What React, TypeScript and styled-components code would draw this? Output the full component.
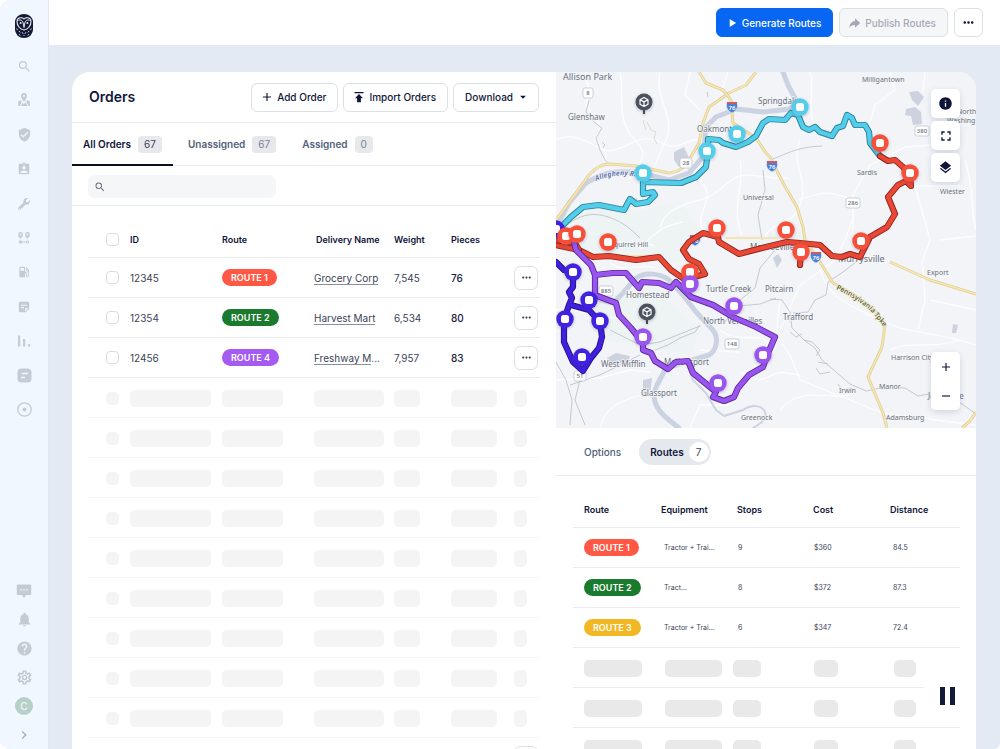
import React from "react";
import styled, { createGlobalStyle } from "styled-components";
import {
  MdAdd,
  MdArrowDropDown,
  MdAssignmentInd,
  MdChevronRight,
  MdFullscreen,
  MdHelp,
  MdInfo,
  MdLayers,
  MdLocalGasStation,
  MdMoreHoriz,
  MdNotifications,
  MdOutlineSettings,
  MdPlayArrow,
  MdRemove,
  MdSearch,
  MdVerifiedUser,
} from "react-icons/md";
import { FaWrench } from "react-icons/fa";

const ink = "#10163a";
const slate = "#52617a";
const line = "#e9ebee";

const GlobalStyle = createGlobalStyle`
  *, *::before, *::after { box-sizing: border-box; }
  body {
    margin: 0;
    background: #fff;
    color: ${ink};
    font-family: Inter, "Liberation Sans", sans-serif;
    font-size: 10px;
    line-height: 14px;
  }
  button, input { font: inherit; color: inherit; }
  button { cursor: pointer; }
`;

/* ---------- Shell ---------- */

const Shell = styled.div`
  position: relative;
  display: flex;
  height: 100vh;
  overflow: hidden;
  border-radius: 10px 0 6px 10px;
  background: #e4eaf3;
`;

const Sidebar = styled.aside`
  display: flex;
  flex-direction: column;
  align-items: center;
  flex: none;
  width: 49px;
  padding: 14px 0 5px;
  background: #f1f7fe;
  border-right: 1px solid #e2e8f1;
`;

const NavGroup = styled.nav<{ $height: number }>`
  display: flex;
  flex-direction: column;
  align-items: center;
  justify-content: space-between;
  height: ${(p) => p.$height}px;
`;

const NavLink = styled.a`
  display: flex;
  align-items: center;
  justify-content: center;
  width: 20px;
  height: 18px;
  color: #c5cbd4;
`;

const Spacer = styled.div<{ $size?: number }>`
  flex: ${(p) => (p.$size ? `0 0 ${p.$size}px` : "1")};
`;

const Avatar = styled.span`
  display: flex;
  align-items: center;
  justify-content: center;
  flex: none;
  width: 18px;
  height: 18px;
  border-radius: 50%;
  background: #b4d0c7;
  color: #f1f7fe;
  font-size: 10px;
  font-weight: 500;
`;

const Main = styled.main`
  display: flex;
  flex-direction: column;
  flex: 1;
  min-width: 0;
`;

const TopBar = styled.header`
  display: flex;
  align-items: center;
  justify-content: flex-end;
  gap: 6px;
  flex: none;
  height: 45px;
  padding: 0 17px;
  background: #fff;
`;

const Workspace = styled.div`
  display: grid;
  grid-template-columns: minmax(0, 484fr) minmax(0, 420fr);
  flex: 1;
  min-height: 0;
  margin: 27px 24px 0 23px;
  border-radius: 18px 18px 0 0;
  overflow: hidden;
  background: #fff;
`;

/* ---------- Buttons ---------- */

const Button = styled.button<{ $tone?: "primary" | "muted"; $trailingIcon?: boolean }>`
  display: flex;
  align-items: center;
  justify-content: center;
  gap: 3px;
  height: 29px;
  padding: ${(p) => (p.$trailingIcon ? "0 8px 0 11px" : "0 11px 0 8px")};
  border-radius: 6px;
  white-space: nowrap;
  font-weight: 500;
  border: 1px solid
    ${(p) => (p.$tone === "primary" ? "#0767f2" : "#dcdfe4")};
  background: ${(p) =>
    p.$tone === "primary" ? "#0767f2" : p.$tone === "muted" ? "#f4f6f8" : "#fff"};
  color: ${(p) =>
    p.$tone === "primary" ? "#fff" : p.$tone === "muted" ? "#a4aab4" : ink};
`;

const IconButton = styled.button<{ $size: number }>`
  display: inline-flex;
  align-items: center;
  justify-content: center;
  width: ${(p) => p.$size}px;
  height: ${(p) => p.$size}px;
  padding: 0;
  border: 1px solid #dcdfe4;
  border-radius: 6px;
  background: #fff;
  vertical-align: middle;
`;

/* ---------- Orders panel ---------- */

const Panel = styled.section`
  display: flex;
  flex-direction: column;
  min-width: 0;
  min-height: 0;
  overflow: hidden;
`;

const PanelHeader = styled.div`
  display: flex;
  align-items: center;
  gap: 5px;
  flex: none;
  height: 51px;
  padding: 0 17px;
  border-bottom: 1px solid ${line};
`;

const Title = styled.h1`
  flex: 1;
  margin: 0;
  font-size: 14px;
  line-height: 18px;
  font-weight: 600;
`;

const TabBar = styled.div`
  display: flex;
  gap: 4px;
  flex: none;
  height: 43px;
  border-bottom: 1px solid ${line};
`;

const Tab = styled.button<{ $active?: boolean }>`
  display: flex;
  align-items: center;
  gap: 7px;
  height: 43px;
  padding: 1px 11px 0;
  border: 0;
  border-bottom: 2px solid ${(p) => (p.$active ? "#0b0e1c" : "transparent")};
  background: none;
  font-weight: 600;
  color: ${(p) => (p.$active ? ink : slate)};
`;

const TabCount = styled.span<{ $active?: boolean }>`
  padding: 0 6px;
  border-radius: 4px;
  background: #e6e8eb;
  font-weight: 400;
  line-height: 17px;
  color: ${(p) => (p.$active ? "#3d4558" : "#7c8593")};
`;

const SearchRow = styled.div`
  flex: none;
  height: 40px;
  padding: 9px 16px 0;
  border-bottom: 1px solid ${line};
`;

const SearchBox = styled.label`
  display: flex;
  align-items: center;
  gap: 6px;
  width: 188px;
  height: 23px;
  padding: 0 6px;
  border-radius: 7px;
  background: #f4f6f8;
  color: #6a7180;
`;

const SearchInput = styled.input`
  flex: 1;
  min-width: 0;
  padding: 0;
  border: 0;
  outline: 0;
  background: none;
`;

const TableWrap = styled.div<{ $left: number }>`
  flex: 1;
  min-height: 0;
  overflow: hidden;
  padding: 0 16px 0 ${(p) => p.$left}px;
`;

const Table = styled.table`
  width: 100%;
  border-collapse: separate;
  border-spacing: 0;
  table-layout: fixed;
`;

const HeadCell = styled.th<{ $pad?: number }>`
  height: 52px;
  padding: 16px 0 0 ${(p) => p.$pad ?? 0}px;
  border-bottom: 1px solid ${line};
  text-align: left;
  font-size: 9px;
  font-weight: 600;
  white-space: nowrap;
`;

const Cell = styled.td<{ $pad?: number; $small?: boolean; $faint?: boolean }>`
  height: 40px;
  padding: 0 0 0 ${(p) => p.$pad ?? 0}px;
  border-bottom: 1px solid ${(p) => (p.$faint ? "#f4f5f6" : line)};
  font-size: ${(p) => (p.$small ? 7 : 10)}px;
  white-space: nowrap;
  color: #3b4357;
`;

const BoneCell = styled(Cell)`
  padding-top: 2px;
`;

const Strong = styled.span`
  font-weight: 500;
  color: #1c2340;
`;

const Checkbox = styled.input`
  appearance: none;
  display: block;
  width: 13px;
  height: 13px;
  margin: 0;
  border: 1px solid #d9dce1;
  border-radius: 4px;
  background: #fff;
`;

const RoutePill = styled.span<{ $color: string }>`
  display: inline-block;
  padding: 0 9px;
  border-radius: 9px;
  background: ${(p) => p.$color};
  color: #fff;
  font-size: 9px;
  font-weight: 600;
  line-height: 17px;
  vertical-align: middle;
`;

const OrderLink = styled.a`
  color: #3b4357;
  text-decoration: none;
  border-bottom: 1px solid #8a90a0;
`;

const Bone = styled.span<{ $w: number; $h?: number; $dark?: boolean }>`
  display: block;
  width: ${(p) => p.$w}px;
  height: ${(p) => p.$h ?? 17}px;
  border-radius: 5px;
  background: ${(p) => (p.$dark ? "#e9e9e9" : "#f4f4f4")};
`;

/* ---------- Map and routes panel ---------- */

const MapArea = styled.div`
  position: relative;
  flex: none;
  height: 356px;
  background: #f2f4f8;
`;

const MapSvg = styled.svg`
  display: block;
  width: 100%;
  height: 100%;
  font-family: "Noto Sans", "Open Sans", sans-serif;
`;

const MapControls = styled.div<{ $bottom?: boolean }>`
  position: absolute;
  right: 16px;
  ${(p) => (p.$bottom ? "bottom: 18px;" : "top: 17px;")}
  display: flex;
  flex-direction: column;
  gap: ${(p) => (p.$bottom ? 0 : 3)}px;
  border-radius: 5px;
  ${(p) => (p.$bottom ? "background: #fff; box-shadow: 0 2px 6px rgba(40, 50, 80, 0.16);" : "")}
`;

const MapButton = styled.button<{ $flat?: boolean }>`
  display: flex;
  align-items: center;
  justify-content: center;
  width: 29px;
  height: 29px;
  padding: 0;
  border: 0;
  border-radius: 5px;
  background: #fff;
  box-shadow: ${(p) => (p.$flat ? "none" : "0 2px 6px rgba(40, 50, 80, 0.16)")};
`;

const RouteTabs = styled.div`
  display: flex;
  align-items: center;
  gap: 7px;
  flex: none;
  height: 48px;
  padding: 0 17px;
  border-bottom: 1px solid ${line};
`;

const PillTab = styled.button<{ $active?: boolean }>`
  display: flex;
  align-items: center;
  gap: 5px;
  height: 26px;
  padding: ${(p) => (p.$active ? "0 2px 0 11px" : "0 11px")};
  border: 0;
  border-radius: 13px;
  background: ${(p) => (p.$active ? "#e5e9ee" : "none")};
  color: ${(p) => (p.$active ? ink : slate)};
  font-weight: ${(p) => (p.$active ? 600 : 500)};
`;

const PillCount = styled.span`
  width: 20px;
  border-radius: 10px;
  background: #fff;
  color: #3d4558;
  font-weight: 400;
  line-height: 20px;
  text-align: center;
`;

const PauseButton = styled.button`
  position: absolute;
  right: 30px;
  bottom: 36px;
  display: flex;
  align-items: center;
  justify-content: center;
  gap: 5px;
  width: 46px;
  height: 34px;
  padding: 0;
  border: 0;
  background: #fff;
`;

const PauseBar = styled.span`
  width: 5px;
  height: 18px;
  background: #141b38;
`;

/* ---------- Icons ---------- */

const OwlLogo = () => (
  <svg width="20" height="24" viewBox="0 0 20 24" aria-label="Owl logo" role="img">
    <path d="M10 0C15 0 18 3 19 7v9c-1 5-4 8-9 8s-8-3-9-8V7c1-4 4-7 9-7z" fill="#131b36" />
    <path
      d="M10 5C8.500 3.200 3.300 2.800 3 7.500c-.2 4.500 3.500 8 7 8.500 3.500-.5 7.200-4 7-8.500C16.700 2.800 11.500 3.200 10 5z"
      fill="none"
      stroke="#e8eef7"
      strokeWidth="1.100"
    />
    <path d="M4.500 6.500c2-1.500 5-.5 5.500 7 .5-7.500 3.500-8.500 5.500-7" fill="none" stroke="#e8eef7" strokeWidth="1" />
    <circle cx="6.600" cy="9" r="1" fill="#e8eef7" />
    <circle cx="13.400" cy="9" r="1" fill="#e8eef7" />
    <path
      d="M2.600 14.500l1 1.600M5 17l1.200 1.400M8.300 18.300l.6 1.500M11.700 18.300l-.6 1.500M15 17l-1.200 1.400M17.400 14.500l-1 1.600M5 20.300l1.300 1M9.500 21.500h1M15 20.300l-1.300 1"
      stroke="#c9d4e6"
      strokeWidth="1"
      fill="none"
    />
  </svg>
);

const MapPinIcon = () => (
  <svg width="14" height="14" viewBox="0 0 14 14" fill="currentColor">
    <path d="M7 0a2.900 2.900 0 0 0-2.900 2.900C4.100 5 7 8.800 7 8.800s2.900-3.800 2.900-5.900A2.900 2.900 0 0 0 7 0zm0 1.900a1.100 1.100 0 1 1 0 2.200 1.100 1.100 0 0 1 0-2.200z" />
    <path d="M1.200 8.500l2.600-1.300 1 1.500-1.900 4.300H1.200zM4 13l1.600-3.200L7 11.300l1.600-2 1.900 3.700zM9.200 8.200l1-1 2.600 1.300V13h-1.200z" />
  </svg>
);

const ChatIcon = () => (
  <svg width="16" height="16" viewBox="0 0 16 16">
    <path d="M1.800 1.500h12.400a1 1 0 0 1 1 1v8.500a1 1 0 0 1-1 1h-4L8 14.700 5.800 12h-4a1 1 0 0 1-1-1V2.500a1 1 0 0 1 1-1z" fill="currentColor" />
    <path d="M4.300 6h1.400v1.400H4.300zM7.300 6h1.400v1.400H7.300zM10.300 6h1.400v1.400h-1.400z" fill="#f1f7fe" />
  </svg>
);

const RouteStopsIcon = () => (
  <svg width="14" height="14" viewBox="0 0 14 14" fill="currentColor">
    <path d="M3.500 1a2.400 2.400 0 0 0-2.400 2.400C1.100 5 3.500 8 3.500 8s2.400-3 2.400-4.600A2.400 2.400 0 0 0 3.500 1zm0 1.500a.9.900 0 1 1 0 1.800.9.900 0 0 1 0-1.800z" />
    <path d="M10.500 1a2.400 2.400 0 0 0-2.400 2.400C8.100 5 10.500 8 10.500 8s2.400-3 2.400-4.600A2.400 2.400 0 0 0 10.500 1zm0 1.500a.9.900 0 1 1 0 1.800.9.900 0 0 1 0-1.800z" />
    <circle cx="3.500" cy="11" r="1.700" />
    <path d="M3.500 10.500h5.500v1H3.500z" />
    <circle cx="10.500" cy="11" r="1.300" fill="none" stroke="currentColor" strokeWidth=".9" />
  </svg>
);

const NoteIcon = () => (
  <svg width="14" height="14" viewBox="0 0 24 24" fill="currentColor">
    <path d="M19 3H5C3.900 3 3 3.900 3 5v14c0 1.100.9 2 2 2h10l6-6V5c0-1.100-.9-2-2-2zM7 8h10v2H7V8zm5 6H7v-2h5v2zm2 5.500V14h5.500L14 19.500z" />
  </svg>
);

const BarsIcon = () => (
  <svg width="14" height="14" viewBox="0 0 14 14" fill="currentColor">
    <path d="M1 1.500h2.200v11H1zM6 5h2.200v7.500H6zM11 10.300h2.200v2.200H11z" />
  </svg>
);

const CardIcon = () => (
  <svg width="15" height="15" viewBox="0 0 15 15">
    <rect x=".5" y=".5" width="14" height="14" rx="4" fill="currentColor" />
    <path d="M4.500 5.500h6.500M4 9.500h4" stroke="#f1f7fe" strokeWidth="1.600" />
  </svg>
);

const TargetIcon = () => (
  <svg width="15" height="15" viewBox="0 0 15 15">
    <circle cx="7.500" cy="7.500" r="6.700" fill="none" stroke="currentColor" strokeWidth="1.300" />
    <circle cx="7.500" cy="7.500" r="2" fill="currentColor" />
  </svg>
);

const PublishIcon = () => (
  <svg width="14" height="14" viewBox="0 0 24 24" fill="currentColor">
    <path d="M12 8.500V4l9 8-9 8v-4.600c-4.500 0-7.500 1.400-10 5.100 1-6 3.500-11.500 10-12z" />
  </svg>
);

const ImportIcon = () => (
  <svg width="14" height="12" viewBox="0 0 14 12" fill="currentColor">
    <path d="M2.500 1h9v1.200h-9zM7 3l4 4.200H8.900v4H5.100v-4H3z" />
  </svg>
);

/* ---------- Map ---------- */

type Point = [number, number];

const cyan = "#52cdea";
const red = "#f8503a";
const purple = "#9a55ee";
const blue = "#4120e0";

const routeLines = [
  {
    color: cyan,
    edge: "#2a7f96",
    points:
      "556,237 564,224 571,217 583,207 599,205 624,210 630,199 636,204 648,202 655,195 653,192 643,194 643,182 681,183 696,177 706,167 708,150 708,139 719,140 723,143 736,147 748,142 756,136 763,123 769,119 785,120 791,113 798,115 803,127 809,130 815,127 820,132 832,136 837,128 843,126 847,115 852,118 855,125 865,125 869,132 870,143 880,156",
  },
  {
    color: "#e84835",
    edge: "#8d2218",
    points:
      "880,156 888,161 895,160 903,167 910,176 911,186 906,181 898,185 888,197 895,214 887,227 870,237 860,257 850,254 842,257 832,256 820,245 800,243 787,242 770,246 739,254 719,242 718,237 703,233 689,242 683,250 689,259 699,264 705,274 691,278 684,279 671,270 659,257 636,260 609,256 593,257 579,250 556,245",
  },
  { color: "#e84835", edge: "#8d2218", points: "801,252 800,265" },
  { color: "#e84835", edge: "#8d2218", points: "556,240 575,243 579,250" },
  {
    color: blue,
    edge: "#24128c",
    points:
      "556,262 564,270 573,273 573,287 569,292 572,298 569,305 564,320 564,342 573,362 583,371 591,358 599,348 602,337 600,322 589,310 571,305",
  },
  {
    color: purple,
    edge: "#5b2a9c",
    points:
      "573,238 576,250 591,265 595,275 595,295 616,303 619,315 631,328 643,343 643,350 651,353 655,361 668,369 676,362 688,361 693,373 716,392 713,397 724,401 734,397 738,388 749,375 763,367 768,353 775,337 756,327 733,317 713,305 691,297 676,282 671,288 659,283 642,282 639,288 626,273 613,273 595,275",
  },
];

const pins: { color: string; at: Point[] }[] = [
  { color: blue, at: [[556, 229], [573, 272], [589, 300], [565, 319], [600, 321], [582, 357]] },
  { color: cyan, at: [[643, 173], [707, 151], [737, 134], [800, 107]] },
  {
    color: red,
    at: [[566, 236], [577, 234], [608, 242], [717, 228], [690, 272], [786, 230], [801, 252], [861, 241], [880, 143], [910, 173]],
  },
  { color: purple, at: [[690, 284], [734, 306], [643, 337], [763, 355], [718, 383]] },
];

const depots: Point[] = [[644, 102], [647, 312]];

const streets = [
  "M585 72L589 90L586 105L600 125L596 140L605 152L607 165",
  "M620 72C625 95 615 120 635 140S630 165 640 172",
  "M556 140C575 130 590 145 605 150S640 130 660 142S690 135 700 140",
  "M660 72C655 100 672 110 668 135L655 165",
  "M690 72L685 95L700 110",
  "M728 72L722 90L735 104",
  "M740 160C745 190 730 205 742 235",
  "M700 180C720 200 690 215 705 232",
  "M800 140C790 165 810 180 800 205S770 220 765 238",
  "M853 218L845 240L833 262L800 285L780 330",
  "M930 145L905 147L870 165L853 195L853 230",
  "M965 160C975 190 970 210 976 230",
  "M900 186L960 186M915 186L930 240L922 262L925 300L918 330",
  "M780 300L776 335L790 355L800 380L830 392L882 413L976 425",
  "M820 270C830 300 850 305 880 320S930 330 976 345",
  "M780 410C800 385 830 400 850 395",
  "M556 310C580 305 590 320 610 318S630 330 640 335",
  "M556 380L600 378L630 370L650 372",
  "M600 428C605 405 625 400 640 395S655 380 668 372",
  "M690 428L700 405L730 405M740 372L760 380L780 372L800 375",
  "M660 228C665 210 680 205 700 200S725 180 740 176S765 180 790 178",
  "M640 250C650 235 665 225 683 222",
  "M810 72C815 90 808 100 812 120",
  "M890 72L895 90L875 105L870 122",
  "M925 72L923 92M860 205C830 185 815 195 798 200",
  "M720 330C740 345 760 330 770 345M700 350L740 352",
  "M610 262C620 275 640 262 655 268M600 240C620 245 640 240 655 246",
  "M940 240L976 236M930 300L976 310M890 350C910 340 930 350 960 340",
];

const rails = [
  "M556 235C575 215 590 212 605 216S630 228 640 238",
  "M770 160C785 155 795 147 822 146",
  "M763 170L765 190L758 215L762 240",
  "M725 322L740 300L755 288L760 268L775 250",
  "M770 299L782 300L790 312L792 328L804 340L815 348L822 360L836 372L850 384L866 391L885 387L905 388L918 396L940 392L962 404L976 414",
  "M804 340L812 342L820 350L816 356M818 362L828 364M790 332L796 337L802 334M816 368L820 374L830 372M838 384L842 390L850 388",
  "M793 313L808 312L815 300L826 295L828 282L843 272L856 262",
  "M700 325L695 332L680 338L668 345L655 350M640 355L600 375L570 385",
  "M556 362L566 380L572 400L570 425M580 380L575 400L585 425",
  "M739 306L760 304L776 298",
  "M610 330L640 345L660 342L700 326",
  "M589 100L586 112L594 122L602 128L596 138L600 150L604 158L608 164",
];

const places: { x: number; y: number; size: number; text: string }[] = [
  { x: 563, y: 80, size: 9, text: "Allison Park" },
  { x: 568, y: 120, size: 8, text: "Glenshaw" },
  { x: 697, y: 132, size: 8, text: "Oakmont" },
  { x: 758, y: 104, size: 8, text: "Springdale" },
  { x: 862, y: 82, size: 7, text: "Milligantown" },
  { x: 957, y: 114, size: 7, text: "North" },
  { x: 947, y: 123, size: 7, text: "Washing" },
  { x: 743, y: 200, size: 7, text: "Universal" },
  { x: 857, y: 175, size: 7, text: "Sardis" },
  { x: 940, y: 194, size: 7, text: "Wiester" },
  { x: 610, y: 247, size: 7, text: "Squirrel Hill" },
  { x: 750, y: 250, size: 8, text: "Monroeville" },
  { x: 838, y: 262, size: 9, text: "Murrysville" },
  { x: 927, y: 275, size: 7, text: "Export" },
  { x: 626, y: 298, size: 8, text: "Homestead" },
  { x: 706, y: 292, size: 8, text: "Turtle Creek" },
  { x: 765, y: 292, size: 8, text: "Pitcairn" },
  { x: 783, y: 320, size: 8, text: "Trafford" },
  { x: 703, y: 324, size: 8, text: "North Versailles" },
  { x: 664, y: 365, size: 8, text: "McKeesport" },
  { x: 601, y: 367, size: 8, text: "West Mifflin" },
  { x: 641, y: 396, size: 8, text: "Glassport" },
  { x: 741, y: 420, size: 7, text: "Greenock" },
  { x: 891, y: 360, size: 7, text: "Harrison City" },
  { x: 839, y: 393, size: 7, text: "Irwin" },
  { x: 879, y: 389, size: 7, text: "Manor" },
  { x: 928, y: 399, size: 8, text: "Jeannette" },
  { x: 886, y: 420, size: 7, text: "Adamsburg" },
];

const stateRoads: [number, number, string][] = [
  [588, 93, "8"],
  [686, 163, "28"],
  [922, 131, "380"],
  [853, 203, "286"],
  [606, 291, "885"],
  [732, 344, "148"],
  [580, 376, "51"],
];

const interstates: Point[] = [[732, 107], [772, 166], [816, 257], [695, 240]];

const Roads = ({ d }: { d: string }) => (
  <>
    <path d={d} stroke="#e2cf92" strokeWidth="3" />
    <path d={d} stroke="#f5e7b6" strokeWidth="1.400" />
  </>
);

const RouteMap = () => (
  <MapSvg viewBox="556 72 420 356" preserveAspectRatio="xMidYMid slice" role="img" aria-label="Route map">
    <defs>
      <path id="turnpike" d="M836 289C850 296 866 305 874 315S882 324 888 334" />
      <path id="allegheny" d="M596 181C610 175 622 174 640 177" />
      <filter id="pinShadow" x="-50%" y="-50%" width="200%" height="200%">
        <feDropShadow dx="0" dy="1" stdDeviation="1.500" floodColor="#283050" floodOpacity="0.300" />
      </filter>
    </defs>
    <rect x="556" y="72" width="420" height="356" fill="#f2f4f8" />
    <g fill="#eef3f3">
      <path d="M556 215L590 205L640 212L680 200L700 232L680 262L600 260L556 250z" />
      <path d="M595 300L650 285L700 330L690 355L640 345L600 340z" />
      <path d="M740 236L800 232L810 245L760 250z" />
    </g>
    <g fill="none" stroke="#fcfdfe" strokeWidth="1.300" strokeLinejoin="round">
      {streets.map((d) => (
        <path key={d} d={d} />
      ))}
    </g>
    <g fill="#ccd3df">
      <path d="M909 92L918 91L924 97L918 106L912 100z" />
      <path d="M906 109L915 107L921 112L922 124L913 125L911 116L905 115z" />
      <path d="M674 152L684 147L690 160L679 167L674 160z" />
      <path d="M773 258L778 254L782 260L777 268z" />
      <path d="M953 324L958 325L956 333L952 333z" />
      <path d="M607 358L616 353L630 356L628 363L610 364z" />
      <path d="M643 380L652 378L650 396L643 396z" />
    </g>
    <g fill="none" stroke="#cbd2e1" strokeLinejoin="round" strokeLinecap="round">
      <path
        d="M556 227L569 203L586 183L599 176C615 170 630 171 645 174L669 180L689 173L703 157L706 127L716 117L736 109L763 112L790 109L797 102L788 85L783 72"
        strokeWidth="5"
      />
      <path
        d="M600 300L613 303L623 293L636 278C645 272 660 273 669 280L683 295L696 312L713 330C719 338 717 350 709 355L686 362L666 368L656 387C652 398 654 408 669 420L679 428"
        strokeWidth="5"
      />
      <path d="M686 362L693 380L706 393L716 410L724 416L743 410C752 404 762 405 765 412S760 424 753 428" strokeWidth="2" />
    </g>
    <g fill="none" stroke="#b7bdc8" strokeWidth=".8" strokeLinejoin="round">
      {rails.map((d) => (
        <path key={d} d={d} />
      ))}
      <path d="M602 142l3 3-2 3M630 197l-2 3 2 1M636 198l1 3M707 92l1 5" />
    </g>
    <g fill="none" stroke="#d5dccb" strokeWidth=".9">
      <path d="M647 122l4 8 5 2-2 6 3 6M643 120l3 10" />
    </g>
    <g fill="none" strokeLinejoin="round">
      <Roads d="M556 220L573 197L589 175C596 167 602 164 609 164L636 166L669 173C680 172 685 166 689 160L699 143L703 123L709 107L729 93L746 85L756 72" />
      <Roads d="M699 72L706 83L723 90L731 100L733 123L756 138L766 153L770 157L783 183L797 207L803 227L805 240L820 262L833 283C850 292 866 302 874 310L885 325L882 347L868 377L883 413L887 428" />
      <Roads d="M890 262L930 280L976 294" />
      <path d="M620 256L659 256M725 238L778 238" stroke="#f5e3b5" strokeWidth="2" />
      <Roads d="M962 428L970 421L976 412" />
    </g>
    <g fontWeight="700" fontSize="7">
      <text fill="#6678ab" fontStyle="italic" stroke="#f1f3f8" strokeWidth="1.500" paintOrder="stroke">
        <textPath href="#allegheny">Allegheny R.</textPath>
      </text>
      <text fill="#4f5344" stroke="#f6efcf" strokeWidth="1.500" paintOrder="stroke" fontWeight="500">
        <textPath href="#turnpike">Pennsylvania Tpke</textPath>
      </text>
    </g>
    <g fill="#6a707b" stroke="#f4f6f9" strokeWidth="1.500" paintOrder="stroke">
      {places.map((p) => (
        <text key={p.text} x={p.x} y={p.y} fontSize={p.size}>
          {p.text}
        </text>
      ))}
    </g>
    {stateRoads.map(([x, y, label]) => (
      <g key={label}>
        <rect
          x={x - 4 - label.length}
          y={y - 5}
          width={8 + label.length * 2}
          height="10"
          rx="2"
          fill="#fff"
          stroke="#b9bec8"
          strokeWidth=".7"
        />
        <text x={x} y={y + 2} fontSize="6" fontWeight="500" fill="#6d7480" textAnchor="middle">
          {label}
        </text>
      </g>
    ))}
    {interstates.map(([x, y]) => (
      <g key={`${x}-${y}`}>
        <path
          d={`M${x - 5} ${y - 5}h10c1 4 1 8-5 11c-6-3-6-7-5-11z`}
          fill="#4a80d4"
          stroke="#e6ecf6"
          strokeWidth=".6"
        />
        <path d={`M${x - 5} ${y - 5}h10v2h-10z`} fill="#d3595f" />
        <text x={x} y={y + 3} fontSize="6" fontWeight="600" fill="#fff" textAnchor="middle">
          76
        </text>
      </g>
    ))}
    <g fill="none" strokeLinejoin="round" strokeLinecap="round">
      {routeLines.map((r) => (
        <g key={r.points}>
          <polyline points={r.points} stroke={r.edge} strokeWidth="6.200" />
          <polyline points={r.points} stroke={r.color} strokeWidth="4.400" />
        </g>
      ))}
    </g>
    {depots.map(([x, y]) => (
      <g key={`${x}-${y}`} filter="url(#pinShadow)">
        <path d={`M${x} ${y + 8}v4`} stroke="#1f242d" strokeWidth="1.600" />
        <circle cx={x} cy={y} r="8.500" fill="#4b525e" />
        <path
          d={`M${x} ${y - 4.5}l4 2.200v4.600l-4 2.200l-4-2.200v-4.600zM${x - 4} ${y - 2.3}l4 2.200l4-2.200M${x} ${y}v4.500`}
          fill="none"
          stroke="#fff"
          strokeWidth="1.200"
          strokeLinejoin="round"
        />
      </g>
    ))}
    {pins.map((group) =>
      group.at.map(([x, y]) => (
        <g key={`${x}-${y}`} filter="url(#pinShadow)">
          <circle cx={x} cy={y} r="8.700" fill={group.color} />
          <rect x={x - 4} y={y - 4} width="8" height="8" rx="2.500" fill="#fff" />
        </g>
      )),
    )}
  </MapSvg>
);

/* ---------- Data ---------- */

const green = "#1a7b2e";

const orders = [
  { id: "12345", route: "ROUTE 1", color: "#ff5845", name: "Grocery Corp", more: "", weight: "7,545", pieces: "76" },
  { id: "12354", route: "ROUTE 2", color: green, name: "Harvest Mart", more: "", weight: "6,534", pieces: "80" },
  { id: "12456", route: "ROUTE 4", color: "#a55bf2", name: "Freshway M", more: "...", weight: "7,957", pieces: "83" },
];

const routes = [
  { route: "ROUTE 1", color: "#ff5845", equipment: "Tractor + Trai...", stops: "9", cost: "$360", distance: "84.5" },
  { route: "ROUTE 2", color: green, equipment: "Tract...", stops: "8", cost: "$372", distance: "87.3" },
  { route: "ROUTE 3", color: "#f2b824", equipment: "Tractor + Trai...", stops: "6", cost: "$347", distance: "72.4" },
];

const orderColumns = [42, 92, 92, 80, 57, 63, 26];
const orderBones = [81, 61, 70, 26, 46, 13];
const routeColumns = [77, 76, 76, 77, 81];
const routeBones = [
  { pad: 11, w: 58 },
  { pad: 15, w: 57 },
  { pad: 7, w: 28 },
  { pad: 12, w: 24 },
  { pad: 15, w: 22 },
];

const Columns = ({ widths }: { widths: number[] }) => {
  const total = widths.reduce((sum, w) => sum + w, 0);
  return (
    <colgroup>
      {widths.map((w, i) => (
        <col key={i} style={{ width: `${(w / total) * 100}%` }} />
      ))}
    </colgroup>
  );
};

const navItems = [
  { label: "Search", icon: <MdSearch size={15} /> },
  { label: "Map", icon: <MapPinIcon /> },
  { label: "Compliance", icon: <MdVerifiedUser size={15} /> },
  { label: "Drivers", icon: <MdAssignmentInd size={14} /> },
  { label: "Maintenance", icon: <FaWrench size={12} /> },
  { label: "Dispatch", icon: <RouteStopsIcon /> },
  { label: "Fuel", icon: <MdLocalGasStation size={14} /> },
  { label: "Documents", icon: <NoteIcon /> },
  { label: "Reports", icon: <BarsIcon /> },
  { label: "Forms", icon: <CardIcon /> },
  { label: "Routing", icon: <TargetIcon /> },
];

const footItems = [
  { label: "Feedback", icon: <ChatIcon /> },
  { label: "Alerts", icon: <MdNotifications size={17} /> },
  { label: "Help", icon: <MdHelp size={17} /> },
  { label: "Settings", icon: <MdOutlineSettings size={17} color="#bcc3cd" /> },
  { label: "Account", icon: <Avatar>C</Avatar> },
  { label: "Expand", icon: <MdChevronRight size={16} color="#a7aeb9" /> },
];

/* ---------- Page ---------- */

const OrdersPanel = () => (
  <Panel>
    <PanelHeader>
      <Title>Orders</Title>
      <Button>
        <MdAdd size={14} />
        Add Order
      </Button>
      <Button>
        <ImportIcon />
        Import Orders
      </Button>
      <Button $trailingIcon>
        Download
        <MdArrowDropDown size={14} />
      </Button>
    </PanelHeader>
    <TabBar role="tablist">
      <Tab role="tab" aria-selected="true" $active>
        All Orders <TabCount $active>67</TabCount>
      </Tab>
      <Tab role="tab" aria-selected="false">
        Unassigned <TabCount>67</TabCount>
      </Tab>
      <Tab role="tab" aria-selected="false">
        Assigned <TabCount>0</TabCount>
      </Tab>
    </TabBar>
    <SearchRow>
      <SearchBox>
        <MdSearch size={12} />
        <SearchInput type="search" aria-label="Search orders" />
      </SearchBox>
    </SearchRow>
    <TableWrap $left={16}>
      <Table>
        <Columns widths={orderColumns} />
        <thead>
          <tr>
            <HeadCell $pad={18}>
              <Checkbox type="checkbox" aria-label="Select all orders" />
            </HeadCell>
            <HeadCell>ID</HeadCell>
            <HeadCell>Route</HeadCell>
            <HeadCell $pad={2}>Delivery Name</HeadCell>
            <HeadCell>Weight</HeadCell>
            <HeadCell>Pieces</HeadCell>
            <HeadCell aria-label="Actions" />
          </tr>
        </thead>
        <tbody>
          {orders.map((o) => (
            <tr key={o.id}>
              <Cell $pad={18}>
                <Checkbox type="checkbox" aria-label={`Select order ${o.id}`} />
              </Cell>
              <Cell>{o.id}</Cell>
              <Cell>
                <RoutePill $color={o.color}>{o.route}</RoutePill>
              </Cell>
              <Cell>
                <OrderLink href="#order">{o.name}</OrderLink>
                {o.more}
              </Cell>
              <Cell>{o.weight}</Cell>
              <Cell>
                <Strong>{o.pieces}</Strong>
              </Cell>
              <Cell>
                <IconButton $size={24} aria-label={`Actions for order ${o.id}`}>
                  <MdMoreHoriz size={13} />
                </IconButton>
              </Cell>
            </tr>
          ))}
          {Array.from({ length: 9 }, (_, row) => (
            <tr key={row}>
              <BoneCell $pad={18} $faint>
                <Bone $w={13} $h={13} />
              </BoneCell>
              {orderBones.map((w, i) => (
                <BoneCell key={i} $faint>
                  <Bone $w={w} />
                </BoneCell>
              ))}
            </tr>
          ))}
          <tr>
            <Cell colSpan={6} />
            <Cell>
              <IconButton $size={24} aria-label="More orders">
                <MdMoreHoriz size={13} />
              </IconButton>
            </Cell>
          </tr>
        </tbody>
      </Table>
    </TableWrap>
  </Panel>
);

const RoutesPanel = () => (
  <Panel>
    <MapArea>
      <RouteMap />
      <MapControls>
        <MapButton aria-label="Map information">
          <MdInfo size={15} />
        </MapButton>
        <MapButton aria-label="Full screen">
          <MdFullscreen size={16} />
        </MapButton>
        <MapButton aria-label="Layers">
          <MdLayers size={15} />
        </MapButton>
      </MapControls>
      <MapControls $bottom>
        <MapButton $flat aria-label="Zoom in">
          <MdAdd size={14} />
        </MapButton>
        <MapButton $flat aria-label="Zoom out">
          <MdRemove size={14} />
        </MapButton>
      </MapControls>
    </MapArea>
    <RouteTabs role="tablist">
      <PillTab role="tab" aria-selected="false">
        Options
      </PillTab>
      <PillTab role="tab" aria-selected="true" $active>
        Routes <PillCount>7</PillCount>
      </PillTab>
    </RouteTabs>
    <TableWrap $left={17}>
      <Table>
        <Columns widths={routeColumns} />
        <thead>
          <tr>
            {["Route", "Equipment", "Stops", "Cost", "Distance"].map((name) => (
              <HeadCell key={name} $pad={11}>
                {name}
              </HeadCell>
            ))}
          </tr>
        </thead>
        <tbody>
          {routes.map((r) => (
            <tr key={r.route}>
              <Cell $pad={11}>
                <RoutePill $color={r.color}>{r.route}</RoutePill>
              </Cell>
              <Cell $small $pad={14}>
                {r.equipment}
              </Cell>
              <Cell $small $pad={12}>
                {r.stops}
              </Cell>
              <Cell $small $pad={12}>
                {r.cost}
              </Cell>
              <Cell $small $pad={14}>
                {r.distance}
              </Cell>
            </tr>
          ))}
          {Array.from({ length: 3 }, (_, row) => (
            <tr key={row}>
              {routeBones.map((b, i) => (
                <BoneCell key={i} $pad={b.pad}>
                  <Bone $w={b.w} $dark />
                </BoneCell>
              ))}
            </tr>
          ))}
        </tbody>
      </Table>
    </TableWrap>
  </Panel>
);

export default function App() {
  return (
    <>
      <GlobalStyle />
      <Shell>
        <Sidebar>
          <OwlLogo />
          <Spacer $size={19} />
          <NavGroup $height={362} aria-label="Main">
            {navItems.map((n) => (
              <NavLink key={n.label} href="#nav" aria-label={n.label}>
                {n.icon}
              </NavLink>
            ))}
          </NavGroup>
          <Spacer />
          <NavGroup $height={162} aria-label="Account">
            {footItems.map((n) => (
              <NavLink key={n.label} href="#nav" aria-label={n.label}>
                {n.icon}
              </NavLink>
            ))}
          </NavGroup>
        </Sidebar>
        <Main>
          <TopBar>
            <Button $tone="primary">
              <MdPlayArrow size={14} />
              Generate Routes
            </Button>
            <Button $tone="muted" disabled>
              <PublishIcon />
              Publish Routes
            </Button>
            <IconButton $size={29} aria-label="More actions">
              <MdMoreHoriz size={15} />
            </IconButton>
          </TopBar>
          <Workspace>
            <OrdersPanel />
            <RoutesPanel />
          </Workspace>
        </Main>
        <PauseButton aria-label="Pause">
          <PauseBar />
          <PauseBar />
        </PauseButton>
      </Shell>
    </>
  );
}
